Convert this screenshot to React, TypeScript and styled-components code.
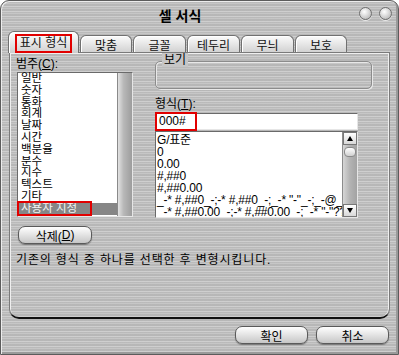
import React from 'react';
import styled, { createGlobalStyle, css } from 'styled-components';

const GlobalStyle = createGlobalStyle`
  html, body {
    margin: 0;
    padding: 0;
    background: #ffffff;
  }
  body {
    font-family: "Liberation Sans", "Noto Sans CJK KR", sans-serif;
    font-size: 12px;
    color: #000;
  }
`;

/* brushed metal look of the mac-style dialog */
const brushed = css`
  background-color: #c1c1c1;
  background-image: repeating-linear-gradient(
    180deg,
    rgba(255, 255, 255, 0.22) 0 1px,
    rgba(0, 0, 0, 0.035) 1px 2px,
    rgba(255, 255, 255, 0.08) 2px 3px,
    rgba(0, 0, 0, 0.05) 3px 5px
  );
`;

const Window = styled.div`
  width: 399px;
  height: 355px;
  box-sizing: border-box;
  border: 1px solid #5c5c5c;
  border-radius: 9px 9px 0 0;
  ${brushed}
  box-shadow: inset 1px 1px 0 #ececec, inset -2px -2px 0 #9a9a9a;
  display: flex;
  flex-direction: column;
  overflow: hidden;
`;

const TitleBar = styled.div`
  height: 27px;
  display: flex;
  align-items: center;
`;

const Title = styled.div`
  flex: 1;
  text-align: center;
  font-weight: bold;
  font-size: 14px;
  padding-top: 1px;
`;

const WinButtons = styled.div`
  display: flex;
  gap: 7px;
  padding-right: 6px;
  padding-bottom: 2px;
`;

const WinButton = styled.span`
  width: 13px;
  height: 13px;
  border-radius: 50%;
  box-sizing: border-box;
  border: 1px solid #6e6e6e;
  background: radial-gradient(circle at 40% 35%, #ffffff 0, #e2e2e2 35%, #a9a9a9 100%);
  box-shadow: 0 1px 0 rgba(255, 255, 255, 0.7);
`;

const TabRow = styled.div`
  height: 24px;
  display: flex;
  align-items: flex-end;
  gap: 1px;
  padding-left: 7px;
  position: relative;
  z-index: 2;
`;

const Tab = styled.div<{ $active?: boolean; $w: number }>`
  width: ${(p) => p.$w}px;
  height: 17px;
  box-sizing: border-box;
  border: 1px solid #707070;
  border-bottom: none;
  border-radius: 6px 6px 0 0;
  background: linear-gradient(#fbfbfb, #d2d2d2);
  box-shadow: inset 1px 1px 0 #ffffff;
  display: flex;
  align-items: center;
  justify-content: center;
  font-size: 12px;
  color: #111;

  ${(p) =>
    p.$active &&
    css`
      height: 22px;
      margin-bottom: -1px;
      background: linear-gradient(#ffffff, #d9d9d9 80%, #cdcdcd);
      align-items: flex-end;
    `}
`;

const Marked = styled.span`
  display: inline-block;
  box-sizing: border-box;
  height: 19px;
  line-height: 15px;
  padding: 0 3px;
  border: 2px solid #e10000;
`;

const Panel = styled.div`
  margin: 0 8px;
  height: 267px;
  box-sizing: border-box;
  border: 1px solid #7a7a7a;
  border-bottom: 2px solid #111;
  border-radius: 0 0 10px 10px;
  box-shadow: inset 1px 1px 0 #efefef, inset -1px 0 0 #efefef;
  padding: 3px 0 0 6px;
  display: flex;
  flex-direction: column;
`;

const Body = styled.div`
  display: grid;
  grid-template-columns: 124px 217px;
  column-gap: 15px;
`;

const Column = styled.div`
  display: flex;
  flex-direction: column;
  align-items: flex-start;
`;

const Label = styled.div`
  line-height: 16px;
  height: 16px;
  font-size: 12px;
  u {
    text-decoration: underline;
  }
`;

const sunken = css`
  border: 1px solid;
  border-color: #6a6a6a #e6e6e6 #e6e6e6 #6a6a6a;
  box-sizing: border-box;
  background: #fff;
`;

const CategoryBox = styled.div`
  ${sunken}
  margin-left: 1px;
  width: 116px;
  height: 145px;
  display: flex;
`;

const Items = styled.div`
  flex: 1;
  display: flex;
  flex-direction: column;
`;

const Item = styled.div<{ $selected?: boolean }>`
  height: 11.8px;
  line-height: 11.8px;
  padding-left: 3px;
  font-size: 11.5px;
  white-space: nowrap;
  position: relative;

  ${(p) =>
    p.$selected &&
    css`
      background: #868686;
      color: #f4f4f4;
      &::after {
        content: '';
        position: absolute;
        left: -1px;
        top: -2px;
        width: 75px;
        height: 15px;
        box-sizing: border-box;
        border: 2px solid #e10000;
      }
    `}
`;

const FullThumb = styled.div`
  width: 14px;
  border-left: 1px solid #8a8a8a;
  background: linear-gradient(90deg, #e2e2e2, #b8b8b8 40%, #9d9d9d);
`;

const PillButton = styled.div<{ $w: number }>`
  width: ${(p) => p.$w}px;
  height: 18px;
  box-sizing: border-box;
  border: 1px solid #5a5a5a;
  border-radius: 7px;
  background: linear-gradient(#ffffff, #e6e6e6 45%, #c6c6c6);
  box-shadow: 0 1px 1px rgba(0, 0, 0, 0.35);
  display: flex;
  align-items: center;
  justify-content: center;
  font-size: 12px;
`;

const DeleteButton = styled(PillButton)`
  margin: 9px 0 0 2px;
`;

const Group = styled.div`
  position: relative;
  margin-top: 5px;
  width: 217px;
  height: 28px;
  box-sizing: border-box;
  border: 1px solid #8c8c8c;
  border-radius: 5px;
  box-shadow: inset 1px 1px 0 #e8e8e8, 1px 1px 0 #e8e8e8;
`;

const GroupLegend = styled.span`
  position: absolute;
  top: -9px;
  left: 6px;
  padding: 0 2px;
  line-height: 14px;
  font-size: 12px;
  background: #c6c6c6;
`;

const FormatLabel = styled(Label)`
  margin-top: 7px;
`;

const InputWrap = styled.div`
  position: relative;
  margin-top: 1px;
  &::after {
    content: '';
    position: absolute;
    left: 0;
    top: -1px;
    width: 42px;
    height: 19px;
    box-sizing: border-box;
    border: 2px solid #e10000;
  }
`;

const Input = styled.div`
  ${sunken}
  width: 203px;
  height: 17px;
  line-height: 15px;
  padding-left: 3px;
  font-size: 12px;
`;

const FormatBox = styled.div`
  ${sunken}
  margin-top: 1px;
  width: 203px;
  height: 87px;
  display: flex;
`;

const FormatItems = styled.div`
  flex: 1;
  padding: 2px 0 0 1px;
  overflow: hidden;
`;

const FormatItem = styled.div`
  height: 12px;
  line-height: 12px;
  white-space: nowrap;
  font-size: 12px;
  letter-spacing: -0.2px;
`;

const ScrollBar = styled.div`
  width: 14px;
  display: flex;
  flex-direction: column;
  background: linear-gradient(90deg, #d6d6d6, #b3b3b3 50%, #a3a3a3);
  border-left: 1px solid #8c8c8c;
`;

const ArrowButton = styled.div<{ $down?: boolean }>`
  height: 13px;
  box-sizing: border-box;
  border: 1px solid #777;
  background: linear-gradient(#ffffff, #d8d8d8);
  display: flex;
  align-items: center;
  justify-content: center;
  margin-top: ${(p) => (p.$down ? 'auto' : '0')};

  &::before {
    content: '';
    border-left: 3px solid transparent;
    border-right: 3px solid transparent;
    ${(p) =>
      p.$down
        ? css`border-top: 5px solid #000;`
        : css`border-bottom: 5px solid #000;`}
  }
`;

const Thumb = styled.div`
  margin: 2px 1px 0;
  height: 8px;
  border-radius: 4px;
  border: 1px solid #8a8a8a;
  background: linear-gradient(#ffffff, #d0d0d0);
`;

const Description = styled.div`
  margin-top: 8px;
  line-height: 16px;
  font-size: 12px;
  letter-spacing: 0.85px;
`;

const Footer = styled.div`
  display: flex;
  justify-content: flex-end;
  gap: 8px;
  padding: 7px 9px 0 0;
`;

const categories = [
  '일반',
  '숫자',
  '통화',
  '회계',
  '날짜',
  '시간',
  '백분율',
  '분수',
  '지수',
  '텍스트',
  '기타',
  '사용자 지정',
];

const formats = [
  'G/표준',
  '0',
  '0.00',
  '#,##0',
  '#,##0.00',
  '_-* #,##0_-;-* #,##0_-;_-* "-"_-;_-@_-',
  '_-* #,##0.00_-;-* #,##0.00_-;_-* "-"??_-;_-@_-',
];

const tabs = [
  { label: '표시 형식', w: 71 },
  { label: '맞춤', w: 52 },
  { label: '글꼴', w: 53 },
  { label: '테두리', w: 53 },
  { label: '무늬', w: 53 },
  { label: '보호', w: 52 },
];

const App: React.FC = () => {
  return (
    <>
      <GlobalStyle />
      <Window>
        <TitleBar>
          <Title>셀 서식</Title>
          <WinButtons>
            <WinButton />
            <WinButton />
          </WinButtons>
        </TitleBar>

        <TabRow>
          {tabs.map((t, i) => (
            <Tab key={t.label} $w={t.w} $active={i === 0}>
              {i === 0 ? <Marked>{t.label}</Marked> : t.label}
            </Tab>
          ))}
        </TabRow>

        <Panel>
          <Body>
            {/* category side */}
            <Column>
              <Label>
                범주(<u>C</u>):
              </Label>
              <CategoryBox>
                <Items>
                  {categories.map((c) => (
                    <Item key={c} $selected={c === '사용자 지정'}>
                      {c}
                    </Item>
                  ))}
                </Items>
                <FullThumb />
              </CategoryBox>
              <DeleteButton $w={74}>
                삭제(<u>D</u>)
              </DeleteButton>
            </Column>

            {/* preview + format side */}
            <Column>
              <Group>
                <GroupLegend>보기</GroupLegend>
              </Group>
              <FormatLabel>
                형식(<u>T</u>):
              </FormatLabel>
              <InputWrap>
                <Input>000#</Input>
              </InputWrap>
              <FormatBox>
                <FormatItems>
                  {formats.map((f) => (
                    <FormatItem key={f}>{f}</FormatItem>
                  ))}
                </FormatItems>
                <ScrollBar>
                  <ArrowButton />
                  <Thumb />
                  <ArrowButton $down />
                </ScrollBar>
              </FormatBox>
            </Column>
          </Body>
          <Description>기존의 형식 중 하나를 선택한 후 변형시킵니다.</Description>
        </Panel>

        <Footer>
          <PillButton $w={73}>확인</PillButton>
          <PillButton $w={73}>취소</PillButton>
        </Footer>
      </Window>
    </>
  );
};

export default App;
